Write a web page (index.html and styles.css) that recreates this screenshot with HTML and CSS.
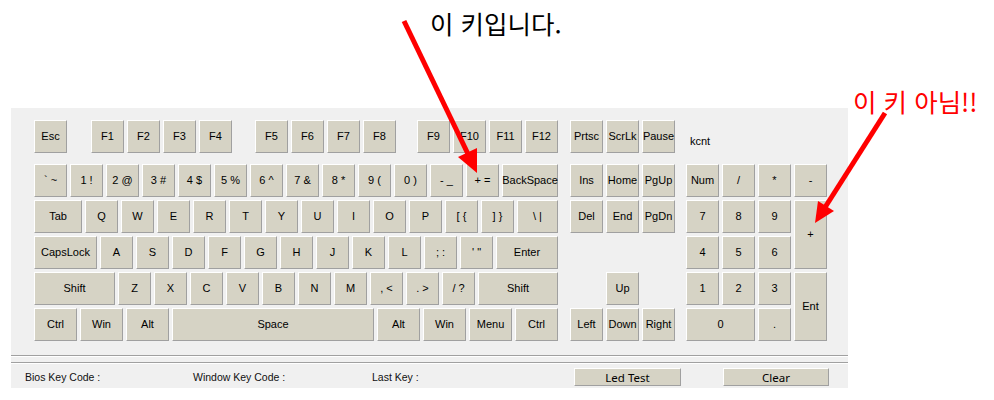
FILE: index.html
```html
<!DOCTYPE html>
<html lang="ko">
<head>
<meta charset="utf-8">
<title>Keyboard Test</title>
<link rel="stylesheet" href="styles.css">
</head>
<body>
<div class="header">
  <span class="note note-main">이 키입니다.</span>
  <span class="note note-red">이 키 아님!!</span>
</div>
<div class="panel">
  <div class="kb">
    <div class="main">
      <div class="row frow">
        <div class="key">Esc</div>
        <div class="key g1">F1</div><div class="key">F2</div><div class="key">F3</div><div class="key">F4</div>
        <div class="key g2">F5</div><div class="key">F6</div><div class="key">F7</div><div class="key">F8</div>
        <div class="key g3">F9</div><div class="key">F10</div><div class="key">F11</div><div class="key">F12</div>
      </div>
      <div class="rows">
        <div class="row">
          <div class="key">` ~</div><div class="key">1 !</div><div class="key">2 @</div><div class="key">3 #</div><div class="key">4 $</div><div class="key">5 %</div><div class="key">6 ^</div><div class="key">7 &amp;</div><div class="key">8 *</div><div class="key">9 (</div><div class="key">0 )</div><div class="key">- _</div><div class="key">+ =</div><div class="key w56">BackSpace</div>
        </div>
        <div class="row">
          <div class="key w48">Tab</div><div class="key">Q</div><div class="key">W</div><div class="key">E</div><div class="key">R</div><div class="key">T</div><div class="key">Y</div><div class="key">U</div><div class="key">I</div><div class="key">O</div><div class="key">P</div><div class="key">[ {</div><div class="key">] }</div><div class="key w41">\ |</div>
        </div>
        <div class="row">
          <div class="key w63">CapsLock</div><div class="key">A</div><div class="key">S</div><div class="key">D</div><div class="key">F</div><div class="key">G</div><div class="key">H</div><div class="key">J</div><div class="key">K</div><div class="key">L</div><div class="key">; :</div><div class="key">' "</div><div class="key w62">Enter</div>
        </div>
        <div class="row">
          <div class="key w81">Shift</div><div class="key">Z</div><div class="key">X</div><div class="key">C</div><div class="key">V</div><div class="key">B</div><div class="key">N</div><div class="key">M</div><div class="key">, &lt;</div><div class="key">. &gt;</div><div class="key">/ ?</div><div class="key w80">Shift</div>
        </div>
        <div class="row">
          <div class="key w43">Ctrl</div><div class="key w43">Win</div><div class="key w43">Alt</div><div class="key w202">Space</div><div class="key w43">Alt</div><div class="key w43">Win</div><div class="key w43">Menu</div><div class="key w43">Ctrl</div>
        </div>
      </div>
    </div>
    <div class="nav">
      <div class="row frow">
        <div class="key">Prtsc</div><div class="key">ScrLk</div><div class="key">Pause</div>
      </div>
      <div class="rows">
        <div class="row"><div class="key">Ins</div><div class="key">Home</div><div class="key">PgUp</div></div>
        <div class="row"><div class="key">Del</div><div class="key">End</div><div class="key">PgDn</div></div>
        <div class="row"></div>
        <div class="row"><div class="key up">Up</div></div>
        <div class="row"><div class="key">Left</div><div class="key">Down</div><div class="key">Right</div></div>
      </div>
    </div>
    <div class="numpad">
      <div class="frow kcnt">kcnt</div>
      <div class="pad">
        <div class="key">Num</div><div class="key">/</div><div class="key">*</div><div class="key">-</div>
        <div class="key">7</div><div class="key">8</div><div class="key">9</div><div class="key tall">+</div>
        <div class="key">4</div><div class="key">5</div><div class="key">6</div>
        <div class="key">1</div><div class="key">2</div><div class="key">3</div><div class="key tall">Ent</div>
        <div class="key wide">0</div><div class="key">.</div>
      </div>
    </div>
  </div>
  <div class="sep sep1"></div>
  <div class="sep sep2"></div>
  <div class="status">
    <span class="lbl l1">Bios Key Code :</span>
    <span class="lbl l2">Window Key Code :</span>
    <span class="lbl l3">Last Key :</span>
    <div class="btn b1">Led Test</div>
    <div class="btn b2">Clear</div>
  </div>
</div>
<svg class="arrows" width="994" height="400" viewBox="0 0 994 400">
  <line x1="404" y1="21" x2="468" y2="154" stroke="#ff0000" stroke-width="5"/>
  <polygon points="477,173 477,148 458,157" fill="#ff0000"/>
  <line x1="885" y1="113" x2="824" y2="209" stroke="#ff0000" stroke-width="5"/>
  <polygon points="815,223 834,211 818,201" fill="#ff0000"/>
</svg>
</body>
</html>
```
FILE: styles.css
```css
html, body {
  margin: 0;
  padding: 0;
  background: #ffffff;
}
body {
  position: relative;
  width: 994px;
  height: 400px;
  overflow: hidden;
  font-family: "Liberation Sans", Arial, sans-serif;
  font-size: 11px;
  color: #000;
}
.header {
  position: relative;
  height: 108px;
}
.note {
  position: absolute;
  font-family: "Noto Sans CJK KR", "Noto Sans", sans-serif;
  font-size: 25.5px;
  line-height: 26px;
  white-space: nowrap;
}
.note-main {
  left: 430px;
  top: 10px;
  color: #000;
}
.note-red {
  left: 853px;
  top: 88px;
  color: #ff0000;
}
.panel {
  margin-left: 11px;
  width: 837px;
  height: 280px;
  background: #f0f0f0;
  display: flex;
  flex-direction: column;
}
.kb {
  display: flex;
  padding: 12px 0 0 23px;
  height: 221px;
}
.main {
  width: 524px;
}
.nav {
  width: 105px;
  margin-left: 12px;
}
.numpad {
  width: 141px;
  margin-left: 11px;
}
.row {
  display: flex;
  gap: 3px;
  height: 33px;
}
.frow {
  height: 33px;
  margin-bottom: 11px;
}
.rows {
  display: flex;
  flex-direction: column;
  gap: 3px;
}
.key {
  box-sizing: border-box;
  width: 33px;
  height: 33px;
  flex: none;
  display: flex;
  align-items: center;
  justify-content: center;
  background: #d6d3c5;
  border: 1px solid;
  border-color: #ffffff #a0a0a0 #a0a0a0 #ffffff;
  white-space: pre;
  line-height: 1;
}
.g1 { margin-left: 21px; }
.g2 { margin-left: 20px; }
.g3 { margin-left: 18px; }
.w41 { width: 41px; }
.w43 { width: 43px; }
.w48 { width: 48px; }
.w56 { width: 56px; }
.w62 { width: 62px; }
.w63 { width: 63px; }
.w80 { width: 80px; }
.w81 { width: 81px; }
.w202 { width: 202px; }
.up { margin-left: 36px; }
.kcnt {
  padding: 14px 0 0 4px;
  box-sizing: border-box;
  line-height: 14px;
}
.pad {
  display: grid;
  grid-template-columns: repeat(4, 33px);
  grid-auto-rows: 33px;
  gap: 3px;
}
.pad .key { width: auto; height: auto; }
.pad .tall { grid-row: span 2; }
.pad .wide { grid-column: span 2; }
.sep {
  height: 0;
  border-top: 1px solid #a0a0a0;
  border-bottom: 1px solid #ffffff;
}
.sep1 { margin-top: 14px; }
.sep2 { margin-top: 5px; }
.status {
  display: flex;
  align-items: flex-start;
  padding-top: 4px;
  height: 20px;
}
.lbl {
  line-height: 18px;
  white-space: nowrap;
  font-size: 10.5px;
  color: #111;
  flex: none;
}
.l1 { padding-left: 14px; box-sizing: border-box; width: 182px; }
.l2 { width: 179px; }
.l3 { width: 202px; }
.btn {
  box-sizing: border-box;
  height: 18px;
  display: flex;
  align-items: center;
  justify-content: center;
  background: #d6d3c5;
  border: 1px solid;
  border-color: #ffffff #a0a0a0 #a0a0a0 #ffffff;
  font-family: "Noto Sans", "Liberation Sans", sans-serif;
  font-size: 11.5px;
  flex: none;
}
.b1 { width: 107px; }
.b2 { width: 106px; margin-left: 42px; }
.arrows {
  position: absolute;
  left: 0;
  top: 0;
  pointer-events: none;
}
```
